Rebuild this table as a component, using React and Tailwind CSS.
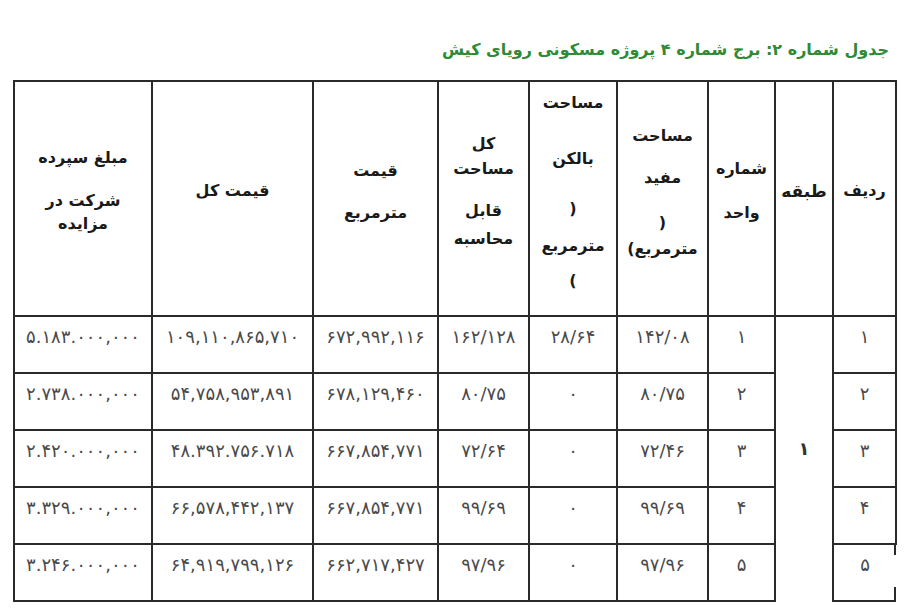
import React from "react";

const B = "border-2 border-[#2a2a2a]";

function Lines({ lines }) {
  return (
    <div className="flex flex-col items-center">
      {lines.map(([t, mt], i) => (
        <div key={i} className="leading-[20px] whitespace-nowrap" style={{ marginTop: mt }}>
          {t}
        </div>
      ))}
    </div>
  );
}

const headers = [
  [["ردیف", 99]],
  [["طبقه", 99]],
  [["شماره", 77], ["واحد", 24]],
  [["مساحت", 44], ["مفید", 22], ["(", 25], ["مترمربع)", 6]],
  [["مساحت", 11], ["بالکن", 36], ["(", 30], ["مترمربع", 17], [")", 15]],
  [["کل", 52], ["مساحت", 5], ["قابل", 22], ["محاسبه", 8]],
  [["قیمت", 79], ["مترمربع", 22]],
  [["قیمت کل", 99]],
  [["مبلغ سپرده", 66], ["شرکت در", 23], ["مزایده", 3]],
];

const rows = [
  ["۱", "۱", "۱۴۲/۰۸", "۲۸/۶۴", "۱۶۲/۱۲۸", "۶۷۲,۹۹۲,۱۱۶", "۱۰۹,۱۱۰,۸۶۵,۷۱۰", "۵.۱۸۳.۰۰۰,۰۰۰"],
  ["۲", "۲", "۸۰/۷۵", "۰", "۸۰/۷۵", "۶۷۸,۱۲۹,۴۶۰", "۵۴,۷۵۸,۹۵۳,۸۹۱", "۲.۷۳۸.۰۰۰,۰۰۰"],
  ["۳", "۳", "۷۲/۴۶", "۰", "۷۲/۶۴", "۶۶۷,۸۵۴,۷۷۱", "۴۸.۳۹۲.۷۵۶.۷۱۸", "۲.۴۲۰.۰۰۰,۰۰۰"],
  ["۴", "۴", "۹۹/۶۹", "۰", "۹۹/۶۹", "۶۶۷,۸۵۴,۷۷۱", "۶۶,۵۷۸,۴۴۲,۱۳۷", "۳.۳۲۹.۰۰۰,۰۰۰"],
  ["۵", "۵", "۹۷/۹۶", "۰", "۹۷/۹۶", "۶۶۲,۷۱۷,۴۲۷", "۶۴,۹۱۹,۷۹۹,۱۲۶", "۳.۲۴۶.۰۰۰,۰۰۰"],
];

const widths = [63, 58, 67, 91, 88, 91, 125, 161, 138];

const TD = "p-0 pt-[9px] align-top text-center text-[18px] text-[#4a4a4a] leading-[22px] whitespace-nowrap";

export default function App() {
  return (
    <div
      dir="rtl"
      className="w-[905px] h-[609px] bg-white overflow-hidden"
      style={{ fontFamily: '"DejaVu Sans", sans-serif' }}
    >
      <div className="pt-[38px] pr-[16px] h-[80px]">
        <div className="text-[16px] font-bold text-[#2f8a35] leading-[24px]">
          جدول شماره ۲: برج شماره ۴ پروژه مسکونی رویای کیش
        </div>
      </div>
      <div className="pr-[8px]">
        <table className="border-collapse table-fixed w-[884px] text-[#1a1a1a]">
          <colgroup>
            {widths.map((w, i) => (
              <col key={i} style={{ width: w }} />
            ))}
          </colgroup>
          <thead>
            <tr className="h-[235px]">
              {headers.map((h, i) => (
                <th
                  key={i}
                  className={`${B} p-0 align-top ${i === 1 ? "text-[17px] font-extrabold" : "text-[16px] font-bold"}`}
                >
                  <Lines lines={h} />
                </th>
              ))}
            </tr>
          </thead>
          <tbody>
            {rows.map((r, ri) => (
              <tr key={ri} className="h-[57px]">
                {ri === 4 ? (
                  <td className={`border-2 border-r-0 border-[#2a2a2a] ${TD} bg-[linear-gradient(to_bottom,#2a2a2a_0,#2a2a2a_10px,transparent_10px,transparent_42px,#2a2a2a_42px)] bg-no-repeat bg-right bg-[length:2px_100%]`}>
                    {r[0]}
                  </td>
                ) : (
                  <td className={`${B} ${TD}`}>{r[0]}</td>
                )}
                {ri === 0 && (
                  <td
                    rowSpan={5}
                    className="border-2 border-b-0 border-[#2a2a2a] p-0 pb-[20px] align-middle text-center text-[18px] font-bold text-[#333] leading-[22px]"
                  >
                    ۱
                  </td>
                )}
                {r.slice(1).map((c, ci) => (
                  <td key={ci} className={`${B} ${TD}`}>
                    {c}
                  </td>
                ))}
              </tr>
            ))}
          </tbody>
        </table>
      </div>
    </div>
  );
}
